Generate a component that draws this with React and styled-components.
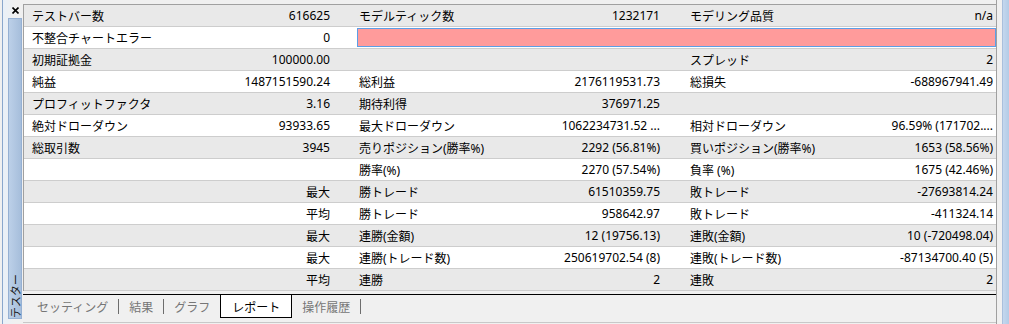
import React from "react";
import styled, { createGlobalStyle } from "styled-components";

const GlobalStyle = createGlobalStyle`
  html, body {
    margin: 0;
    padding: 0;
    background: #f0f0f0;
  }
  body {
    font-family: "Noto Sans", "Noto Sans CJK JP", sans-serif;
    font-size: 12px;
    color: #000;
  }
`;

const rows = [
  ["テストバー数", "616625", "モデルティック数", "1232171", "モデリング品質", "n/a"],
  ["不整合チャートエラー", "0", "ERROR"],
  ["初期証拠金", "100000.00", "", "", "スプレッド", "2"],
  ["純益", "1487151590.24", "総利益", "2176119531.73", "総損失", "-688967941.49"],
  ["プロフィットファクタ", "3.16", "期待利得", "376971.25", "", ""],
  ["絶対ドローダウン", "93933.65", "最大ドローダウン", "1062234731.52 ...", "相対ドローダウン", "96.59% (171702...."],
  ["総取引数", "3945", "売りポジション(勝率%)", "2292 (56.81%)", "買いポジション(勝率%)", "1653 (58.56%)"],
  ["", "", "勝率(%)", "2270 (57.54%)", "負率 (%)", "1675 (42.46%)"],
  ["", "最大", "勝トレード", "61510359.75", "敗トレード", "-27693814.24"],
  ["", "平均", "勝トレード", "958642.97", "敗トレード", "-411324.14"],
  ["", "最大", "連勝(金額)", "12 (19756.13)", "連敗(金額)", "10 (-720498.04)"],
  ["", "最大", "連勝(トレード数)", "250619702.54 (8)", "連敗(トレード数)", "-87134700.40 (5)"],
  ["", "平均", "連勝", "2", "連敗", "2"],
];

const tabs = [
  { name: "セッティング" },
  { name: "結果" },
  { name: "グラフ" },
  { name: "レポート", active: true },
  { name: "操作履歴" },
];

const Frame = styled.div`
  display: flex;
  width: 1009px;
  height: 324px;
  overflow: hidden;
`;

const LeftDock = styled.div`
  width: 21px;
  display: flex;
  flex-direction: column;
  align-items: flex-end;
  border-left: 1px solid #8aa7cc;
  margin-left: 2px;
  box-sizing: border-box;
  background: linear-gradient(90deg, #e9f0f8 0%, #f0f0f0 60%);
`;

const Close = styled.div`
  width: 14px;
  height: 14px;
  display: flex;
  align-items: center;
  justify-content: center;
  margin: 3px 1px 0 0;
`;

const DockBar = styled.div`
  flex: 1;
  width: 12px;
  margin: 1px 1px 5px 0;
  background: linear-gradient(90deg, #bcd0e8, #a6bedb);
  border: 1px solid #95b0d3;
  display: flex;
  flex-direction: column;
  justify-content: flex-end;
  align-items: center;
`;

const DockLabel = styled.span`
  writing-mode: vertical-rl;
  text-orientation: sideways;
  transform: rotate(180deg);
  font-family: "Noto Sans CJK JP", sans-serif;
  font-size: 11px;
  line-height: 12px;
  color: #1a1a1a;
  padding-bottom: 1px;
`;

const Main = styled.div`
  flex: 1;
  display: flex;
  flex-direction: column;
  padding-top: 4px;
  border-right: 1px solid #a0a0a0;
`;

const Table = styled.div`
  border-top: 1px solid #a0a0a0;
  border-left: 1px solid #a0a0a0;
  display: flex;
  flex-direction: column;
`;

const Row = styled.div`
  display: grid;
  grid-template-columns: 152px 162px 170px 160px 170px 1fr;
  height: 21px;
  border-bottom: 1px solid #cdcdcd;
  background: ${(p) => (p.$odd ? "#ffffff" : "#e9e9e9")};
  align-items: center;
  white-space: nowrap;
`;

const Label = styled.div`
  padding-left: ${(p) => p.$pad}px;
  overflow: hidden;
`;

const Value = styled.div`
  text-align: right;
  padding-right: ${(p) => p.$pad}px;
  overflow: hidden;
`;

const ErrorBox = styled.div`
  grid-column: 3 / 7;
  height: 17px;
  margin: 0 0 0 19px;
  background: #ff9b9b;
  border: 1px solid #5c9ee6;
`;

const Gap = styled.div`
  height: 3px;
  border-bottom: 1px solid #000;
`;

const TabBar = styled.div`
  display: flex;
  align-items: flex-start;
  height: 23px;
  padding-left: 4px;
`;

const Tab = styled.div`
  height: 23px;
  display: flex;
  align-items: center;
  padding: 0 ${(p) => (p.$active ? 11 : 9)}px;
  box-sizing: border-box;
  font-family: "Noto Sans CJK JP", sans-serif;
  font-size: 12px;
  color: ${(p) => (p.$active ? "#000" : "#767676")};
  background: ${(p) => (p.$active ? "#ffffff" : "transparent")};
  border: 1px solid ${(p) => (p.$active ? "#000" : "transparent")};
  border-top: none;
`;

const Sep = styled.div`
  width: 1px;
  height: 15px;
  margin-top: 4px;
  background: #6d6d6d;
`;

const BottomLine = styled.div`
  flex: 1;
  border-bottom: 1px solid #c8c8c8;
  margin-bottom: 1px;
`;

const RightEdge = styled.div`
  width: 12px;
  display: flex;
`;

const EdgeGap = styled.div`
  width: 5px;
  background: #f0f0f0;
`;

const EdgeBar = styled.div`
  flex: 1;
  background: linear-gradient(90deg, #c4d7ee, #b3cbe6);
  border-left: 1px solid #a9bfdc;
`;

const CloseIcon = () => (
  <svg width="7" height="7" viewBox="0 0 7 7">
    <path d="M0.5 0.5L6.5 6.5M6.5 0.5L0.5 6.5" stroke="#000" strokeWidth="1.6" />
  </svg>
);

const StatRow = ({ cells, odd }) => {
  if (cells[2] === "ERROR") {
    return (
      <Row $odd={odd}>
        <Label $pad={8}>{cells[0]}</Label>
        <Value $pad={8}>{cells[1]}</Value>
        <ErrorBox />
      </Row>
    );
  }
  return (
    <Row $odd={odd}>
      <Label $pad={8}>{cells[0]}</Label>
      <Value $pad={8}>{cells[1]}</Value>
      <Label $pad={21}>{cells[2]}</Label>
      <Value $pad={8}>{cells[3]}</Value>
      <Label $pad={22}>{cells[4]}</Label>
      <Value $pad={3}>{cells[5]}</Value>
    </Row>
  );
};

export default function App() {
  return (
    <>
      <GlobalStyle />
      <Frame>
        <LeftDock>
          <Close>
            <CloseIcon />
          </Close>
          <DockBar>
            <DockLabel>テスター</DockLabel>
          </DockBar>
        </LeftDock>
        <Main>
          <Table>
            {rows.map((r, i) => (
              <StatRow key={i} cells={r} odd={i % 2 === 1} />
            ))}
          </Table>
          <Gap />
          <TabBar>
            {tabs.map((t, i) => {
              const next = tabs[i + 1];
              const showSep = !t.active && !(next && next.active);
              return (
                <React.Fragment key={t.name}>
                  <Tab $active={t.active}>{t.name}</Tab>
                  {showSep && <Sep />}
                </React.Fragment>
              );
            })}
          </TabBar>
          <BottomLine />
        </Main>
        <RightEdge>
          <EdgeGap />
          <EdgeBar />
        </RightEdge>
      </Frame>
    </>
  );
}
